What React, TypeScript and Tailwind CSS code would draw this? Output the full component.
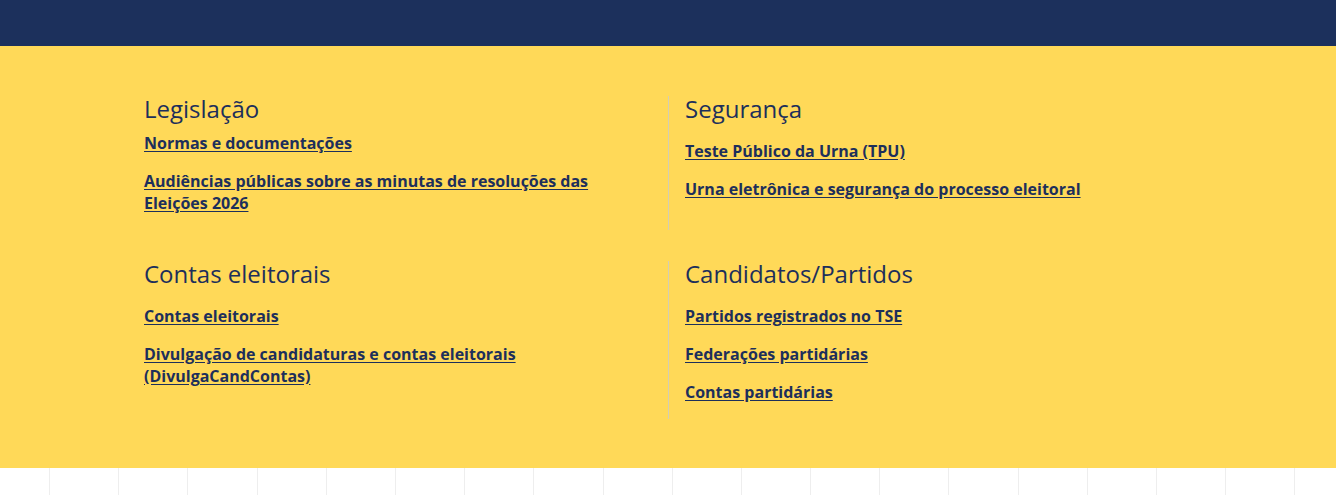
const sections = [
  {
    title: "Legislação",
    tight: true,
    links: [
      "Normas e documentações",
      "Audiências públicas sobre as minutas de resoluções das Eleições 2026",
    ],
  },
  {
    title: "Segurança",
    links: ["Teste Público da Urna (TPU)", "Urna eletrônica e segurança do processo eleitoral"],
  },
  {
    title: "Contas eleitorais",
    links: [
      "Contas eleitorais",
      "Divulgação de candidaturas e contas eleitorais (DivulgaCandContas)",
    ],
  },
  {
    title: "Candidatos/Partidos",
    links: ["Partidos registrados no TSE", "Federações partidárias", "Contas partidárias"],
  },
];

function Section({ title, links, tight, right }: { title: string; links: string[]; tight?: boolean; right?: boolean }) {
  return (
    <div className={right ? "border-l border-[#d3cdb4] pl-4 pb-4" : "pr-4 pb-4"}>
      <h2 className="text-[24px] leading-[26px] font-normal text-[#1d2f5b]">{title}</h2>
      <ul
        className={
          tight
            ? "mt-[10px] flex flex-col gap-4 text-[16px] leading-[22px]"
            : "mt-[18px] flex flex-col gap-4 text-[16px] leading-[22px]"
        }
      >
        {links.map((l) => (
          <li key={l}>
            <a href="#" className="font-bold text-[#1d2f5b] underline underline-offset-2">
              {l}
            </a>
          </li>
        ))}
      </ul>
    </div>
  );
}

export default function App() {
  return (
    <div className="min-h-screen bg-white" style={{ fontFamily: '"Open Sans", "Noto Sans", sans-serif' }}>
      {/* top bar */}
      <div className="h-[46px] bg-[#1c305c]" />

      {/* yellow link panel */}
      <div className="bg-[#ffd958] pt-[50px] pb-[49px]">
        <div className="mx-auto grid w-[1048px] grid-cols-2 gap-y-[31px]">
          <Section {...sections[0]} />
          <Section {...sections[1]} right />
          <Section {...sections[2]} />
          <Section {...sections[3]} right />
        </div>
      </div>

      {/* faint grid below */}
      <div className="flex h-[60px] pl-[49px]">
        {Array.from({ length: 19 }).map((_, i) => (
          <div key={i} className="h-full w-[69.2px] shrink-0 border-l border-[#eeeeee]" />
        ))}
      </div>
    </div>
  );
}
